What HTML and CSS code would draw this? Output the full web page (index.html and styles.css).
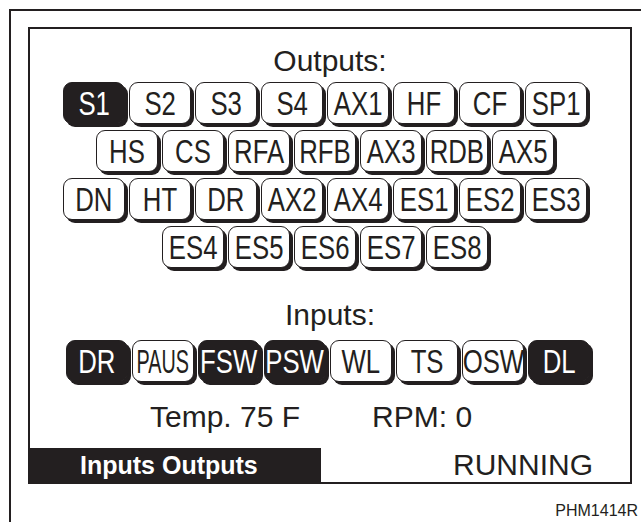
FILE: index.html
```html
<!DOCTYPE html>
<html>
<head>
<meta charset="utf-8">
<link rel="stylesheet" href="styles.css">
</head>
<body>
<div class="page">
  <div class="outer">
    <div class="screen">
      <div class="main">
        <div class="label">Outputs:</div>
        <div class="outputs">
          <div class="row">
            <div class="btn on"><span class="t">S1</span></div>
            <div class="btn"><span class="t">S2</span></div>
            <div class="btn"><span class="t">S3</span></div>
            <div class="btn"><span class="t">S4</span></div>
            <div class="btn"><span class="t">AX1</span></div>
            <div class="btn"><span class="t">HF</span></div>
            <div class="btn"><span class="t">CF</span></div>
            <div class="btn"><span class="t">SP1</span></div>
          </div>
          <div class="row">
            <div class="btn"><span class="t">HS</span></div>
            <div class="btn"><span class="t">CS</span></div>
            <div class="btn"><span class="t">RFA</span></div>
            <div class="btn"><span class="t">RFB</span></div>
            <div class="btn"><span class="t">AX3</span></div>
            <div class="btn"><span class="t">RDB</span></div>
            <div class="btn"><span class="t">AX5</span></div>
          </div>
          <div class="row">
            <div class="btn"><span class="t">DN</span></div>
            <div class="btn"><span class="t">HT</span></div>
            <div class="btn"><span class="t">DR</span></div>
            <div class="btn"><span class="t">AX2</span></div>
            <div class="btn"><span class="t">AX4</span></div>
            <div class="btn"><span class="t">ES1</span></div>
            <div class="btn"><span class="t">ES2</span></div>
            <div class="btn"><span class="t">ES3</span></div>
          </div>
          <div class="row">
            <div class="btn"><span class="t">ES4</span></div>
            <div class="btn"><span class="t">ES5</span></div>
            <div class="btn"><span class="t">ES6</span></div>
            <div class="btn"><span class="t">ES7</span></div>
            <div class="btn"><span class="t">ES8</span></div>
          </div>
        </div>
        <div class="label inputs-label">Inputs:</div>
        <div class="row inputs">
          <div class="btn on"><span class="t">DR</span></div>
          <div class="btn"><span class="t sq">PAUS</span></div>
          <div class="btn on"><span class="t">FSW</span></div>
          <div class="btn on"><span class="t">PSW</span></div>
          <div class="btn"><span class="t">WL</span></div>
          <div class="btn"><span class="t">TS</span></div>
          <div class="btn"><span class="t">OSW</span></div>
          <div class="btn on"><span class="t">DL</span></div>
        </div>
        <div class="readings">
          <span class="reading">Temp. 75 F</span>
          <span class="reading">RPM: 0</span>
        </div>
      </div>
      <div class="bar">
        <div class="tab">Inputs Outputs</div>
        <div class="status">RUNNING</div>
      </div>
    </div>
    <div class="code">PHM1414R</div>
  </div>
</div>
</body>
</html>
```

FILE: styles.css
```css
html, body {
  margin: 0;
  padding: 0;
  background: #ffffff;
}

body {
  font-family: "Liberation Sans", Arial, sans-serif;
  color: #231f20;
}

.page {
  width: 641px;
  height: 522px;
  overflow: hidden;
  background: #ffffff;
}

.outer {
  box-sizing: border-box;
  margin: 9px 0 0 9px;
  height: 513px;
  border-left: 2px solid #231f20;
  border-top: 2px solid #231f20;
  padding: 16px 0 0 17px;
}

.screen {
  box-sizing: border-box;
  width: 604px;
  height: 457px;
  border: 2px solid #231f20;
  display: flex;
  flex-direction: column;
}

.main {
  flex: 1;
  padding-top: 15px;
  display: flex;
  flex-direction: column;
}

.label {
  font-size: 30px;
  line-height: 34px;
  text-align: center;
}

.outputs {
  margin-top: 4px;
  display: flex;
  flex-direction: column;
  gap: 6px;
  padding-right: 10px;
}

.row {
  display: flex;
  justify-content: center;
  gap: 4px;
}

.inputs-label {
  margin-top: 30px;
}

.inputs {
  margin-top: 8px;
  padding-right: 4px;
}

.btn {
  box-sizing: border-box;
  width: 62px;
  height: 42px;
  border: 1.5px solid #231f20;
  border-radius: 9px;
  box-shadow: 3px 3px 0 0 #231f20;
  background: #ffffff;
  color: #231f20;
  display: flex;
  align-items: center;
  justify-content: center;
  font-size: 33px;
  line-height: 1;
}

.btn.on {
  background: #231f20;
  color: #ffffff;
}

.t {
  display: inline-block;
  transform: scaleX(0.78);
  white-space: nowrap;
}

.t.sq {
  transform: scaleX(0.6);
}

.readings {
  margin-top: 18px;
  display: flex;
  gap: 72px;
  padding-left: 120px;
  font-size: 30px;
  line-height: 34px;
}

.bar {
  height: 34px;
  display: flex;
}

.tab {
  box-sizing: border-box;
  width: 291px;
  padding-left: 50px;
  background: #231f20;
  color: #ffffff;
  font-weight: bold;
  font-size: 25px;
  line-height: 34px;
  white-space: nowrap;
}

.status {
  padding-left: 132px;
  font-size: 30px;
  line-height: 34px;
  white-space: nowrap;
}

.code {
  margin-top: 18px;
  padding-right: 3px;
  text-align: right;
  font-size: 16px;
  line-height: 18px;
}
```
